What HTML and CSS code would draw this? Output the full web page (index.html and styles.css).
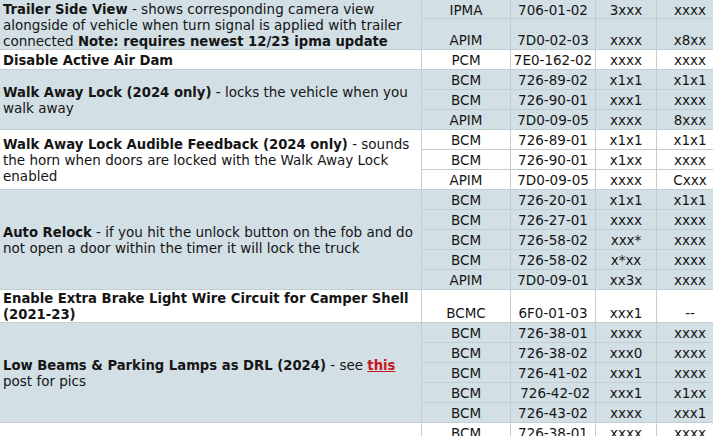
FILE: index.html
```html
<!DOCTYPE html>
<html>
<head>
<meta charset="utf-8">
<link rel="stylesheet" href="styles.css">
</head>
<body>
<table class="codes">
<colgroup>
<col class="c-desc"><col class="c-mod"><col class="c-addr"><col class="c-v1"><col class="c-v2">
</colgroup>
<tbody>
<tr class="blue">
<td class="desc" rowspan="2"><b>Trailer Side View</b> - shows corresponding camera view alongside of vehicle when turn signal is applied with trailer connected <b>Note: requires newest 12/23 ipma update</b></td>
<td class="first">IPMA</td><td class="first">706-01-02</td><td class="first">3xxx</td><td class="first">xxxx</td>
</tr>
<tr class="blue">
<td class="bottom tall1">APIM</td><td class="bottom">7D0-02-03</td><td class="bottom">xxxx</td><td class="bottom">x8xx</td>
</tr>
<tr class="white">
<td class="desc"><b>Disable Active Air Dam</b></td>
<td>PCM</td><td>7E0-162-02</td><td>xxxx</td><td>xxxx</td>
</tr>
<tr class="blue">
<td class="desc" rowspan="3"><b>Walk Away Lock (2024 only)</b> - locks the vehicle when you walk away</td>
<td>BCM</td><td>726-89-02</td><td>x1x1</td><td>x1x1</td>
</tr>
<tr class="blue"><td>BCM</td><td>726-90-01</td><td>xxx1</td><td>xxxx</td></tr>
<tr class="blue"><td>APIM</td><td>7D0-09-05</td><td>xxxx</td><td>8xxx</td></tr>
<tr class="white">
<td class="desc" rowspan="3"><b>Walk Away Lock Audible Feedback (2024 only)</b> - sounds the horn when doors are locked with the Walk Away Lock enabled</td>
<td>BCM</td><td>726-89-01</td><td>x1x1</td><td>x1x1</td>
</tr>
<tr class="white"><td>BCM</td><td>726-90-01</td><td>x1xx</td><td>xxxx</td></tr>
<tr class="white"><td>APIM</td><td>7D0-09-05</td><td>xxxx</td><td>Cxxx</td></tr>
<tr class="blue">
<td class="desc" rowspan="5"><b>Auto Relock</b> - if you hit the unlock button on the fob and do not open a door within the timer it will lock the truck</td>
<td>BCM</td><td>726-20-01</td><td>x1x1</td><td>x1x1</td>
</tr>
<tr class="blue"><td>BCM</td><td>726-27-01</td><td>xxxx</td><td>xxxx</td></tr>
<tr class="blue"><td>BCM</td><td>726-58-02</td><td>xxx*</td><td>xxxx</td></tr>
<tr class="blue"><td>BCM</td><td>726-58-02</td><td>x*xx</td><td>xxxx</td></tr>
<tr class="blue"><td>APIM</td><td>7D0-09-01</td><td>xx3x</td><td>xxxx</td></tr>
<tr class="white">
<td class="desc tall2"><b>Enable Extra Brake Light Wire Circuit for Camper Shell (2021-23)</b></td>
<td class="bottom">BCMC</td><td class="bottom">6F0-01-03</td><td class="bottom">xxx1</td><td class="bottom">--</td>
</tr>
<tr class="blue">
<td class="desc" rowspan="5"><b>Low Beams &amp; Parking Lamps as DRL (2024)</b> - see <a class="link" href="#">this</a> post for pics</td>
<td>BCM</td><td>726-38-01</td><td>xxxx</td><td>xxxx</td>
</tr>
<tr class="blue"><td>BCM</td><td>726-38-02</td><td>xxx0</td><td>xxxx</td></tr>
<tr class="blue"><td>BCM</td><td>726-41-02</td><td>xxx1</td><td>xxxx</td></tr>
<tr class="blue"><td>BCM</td><td>&nbsp;726-42-02</td><td>xxx1</td><td>x1xx</td></tr>
<tr class="blue"><td>BCM</td><td>726-43-02</td><td>xxxx</td><td>xxx1</td></tr>
<tr class="white">
<td class="desc" rowspan="2"></td>
<td>BCM</td><td>726-38-01</td><td>xxxx</td><td>xxxx</td>
</tr>
<tr class="white"><td>BCM</td><td>726-38-02</td><td>xxxx</td><td>xxxx</td></tr>
</tbody>
</table>
</body>
</html>
```
FILE: styles.css
```css
html, body {
  margin: 0;
  padding: 0;
  overflow: hidden;
  background: #ffffff;
}
.codes {
  border-collapse: collapse;
  table-layout: fixed;
  width: 724px;
  margin: -1px 0 0 -1px;
  font-family: "DejaVu Sans", Verdana, sans-serif;
  font-size: 13.5px;
  line-height: 16px;
  color: #151515;
}
.codes b {
  font-size: 13.2px;
  line-height: 1;
}
.c-desc { width: 422px; }
.c-mod { width: 89px; }
.c-addr { width: 85px; }
.c-v1 { width: 61px; }
.c-v2 { width: 67px; }
.codes td {
  border: 1px solid #c3ced3;
  height: 19px;
  padding: 0;
  text-align: center;
  vertical-align: middle;
  white-space: nowrap;
}
.codes td.desc {
  text-align: left;
  padding: 0 3px;
  white-space: normal;
}
.codes td.first {
  height: 17px;
  padding-top: 1px;
}
.codes td.bottom {
  vertical-align: bottom;
  padding-bottom: 1px;
}
.codes td.tall1 {
  height: 29px;
}
.codes td.tall2 {
  height: 32px;
}
.blue td {
  background: #d2dfe5;
}
.white td {
  background: #ffffff;
}
.link {
  color: #c8161d;
  font-weight: bold;
  font-size: 13.2px;
  line-height: 1;
  text-decoration: underline;
}
```
